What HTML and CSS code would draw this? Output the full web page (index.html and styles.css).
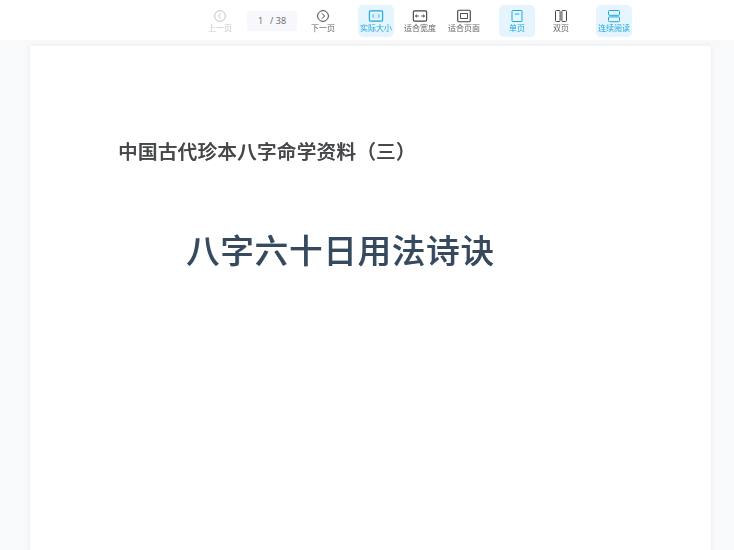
FILE: index.html
```html
<!DOCTYPE html>
<html lang="zh">
<head>
<meta charset="utf-8">
<title>八字六十日用法诗诀</title>
<link rel="stylesheet" href="styles.css">
</head>
<body>
<header class="toolbar">
  <div class="btn disabled">
    <svg class="ico" viewBox="0 0 14 14"><circle cx="7" cy="7" r="5.4"/><path d="M8 4.4 5.4 7 8 9.6"/></svg>
    <span>上一页</span>
  </div>
  <div class="pager"><span>1</span><span class="total">/ 38</span></div>
  <div class="btn">
    <svg class="ico" viewBox="0 0 14 14"><circle cx="7" cy="7" r="5.4"/><path d="M6 4.4 8.6 7 6 9.6"/></svg>
    <span>下一页</span>
  </div>
  <div class="btn active sep">
    <svg class="ico wide" viewBox="0 0 14 12"><rect x="1.2" y="1.5" width="11.6" height="9" rx="1"/><path class="thin" d="M4.5 4.5v3M7 4.7v.4M7 6.9v.4M9.5 4.5v3"/></svg>
    <span>实际大小</span>
  </div>
  <div class="btn">
    <svg class="ico wide" viewBox="0 0 14 12"><rect x="1.2" y="1.5" width="11.6" height="9" rx="1"/><path class="thin" d="M3 6h3M4.4 4.8 3 6l1.4 1.2M11 6H8M9.6 4.8 11 6 9.6 7.2"/></svg>
    <span>适合宽度</span>
  </div>
  <div class="btn">
    <svg class="ico wide" viewBox="0 0 14 12"><rect x="1.5" y="1" width="11" height="10" rx="1"/><rect class="thin" x="4" y="3.8" width="6" height="4.4"/></svg>
    <span>适合页面</span>
  </div>
  <div class="btn active sep">
    <svg class="ico" viewBox="0 0 14 14"><rect x="2" y="1.5" width="10" height="11" rx="1"/><path d="M4.8 5h4.4"/></svg>
    <span>单页</span>
  </div>
  <div class="btn">
    <svg class="ico" viewBox="0 0 14 14"><rect x="1.5" y="1.5" width="4.6" height="11" rx="1"/><rect x="7.9" y="1.5" width="4.6" height="11" rx="1"/></svg>
    <span>双页</span>
  </div>
  <div class="btn active sep">
    <svg class="ico" viewBox="0 0 14 14"><rect x="1.5" y="1.5" width="11" height="4.8" rx="1"/><rect x="1.5" y="7.9" width="11" height="4.8" rx="1"/></svg>
    <span>连续阅读</span>
  </div>
</header>
<main class="viewer">
  <article class="page">
    <h2 class="subtitle">中国古代珍本八字命学资料（三）</h2>
    <h1 class="title">八字六十日用法诗诀</h1>
  </article>
</main>
</body>
</html>
```
FILE: styles.css
```css
* { box-sizing: border-box; }
html, body { margin: 0; height: 100%; }
body {
  width: 734px;
  height: 550px;
  overflow: hidden;
  background: #f8f9fb;
  font-family: "Noto Sans CJK SC", "Noto Sans", sans-serif;
}
.toolbar {
  height: 40px;
  padding: 5px 0 0 202px;
  background: #fff;
  display: flex;
  align-items: flex-start;
  gap: 8px;
}
.btn {
  width: 36px;
  height: 32px;
  flex: none;
  border-radius: 5px;
  display: flex;
  flex-direction: column;
  align-items: center;
  padding-top: 5px;
  color: #666;
  font-size: 8px;
  line-height: 11px;
  white-space: nowrap;
}
.btn span { margin-top: -1px; filter: blur(0.35px); }
.ico {
  width: 14px;
  height: 14px;
  flex: none;
  margin-top: -1px;
  fill: none;
  stroke: #3f4650;
  stroke-width: 1;
}
.ico.wide { width: 16px; }
.ico .thin { stroke-width: 0.8; }
.sep { margin-left: 9px; }
.active { background: #e6f5fd; color: #1ba7de; }
.active .ico { stroke: #1ba7de; }
.disabled { color: #c4c6c9; }
.disabled .ico { stroke: #c4c6c9; }
.pager {
  width: 50px;
  height: 20px;
  margin: 6px 0 0 1px;
  flex: none;
  border-radius: 3px;
  background: #f7f8fb;
  color: #666;
  font-size: 9px;
  line-height: 20px;
  font-family: "Open Sans", sans-serif;
  display: flex;
  justify-content: center;
  gap: 7px;
}
.viewer { padding: 6px 23px 0 30px; }
.page {
  width: 681px;
  height: 520px;
  background: #fff;
  box-shadow: 0 0 5px rgba(60, 70, 90, 0.09);
  padding: 91px 0 0 88px;
}
.subtitle {
  margin: 0;
  font-size: 19.5px;
  line-height: 28px;
  letter-spacing: 0.35px;
  font-weight: 500;
  color: #454749;
  white-space: nowrap;
  text-shadow: 0.3px 0 0 #55575a;
  filter: blur(0.5px);
}
.title {
  margin: 62px 0 0 68px;
  font-size: 33.5px;
  line-height: 44px;
  letter-spacing: 0.8px;
  font-weight: 500;
  color: #37495d;
  white-space: nowrap;
  text-shadow: 0.4px 0.4px 0 #7a8ea3;
  filter: blur(0.6px);
}
```
